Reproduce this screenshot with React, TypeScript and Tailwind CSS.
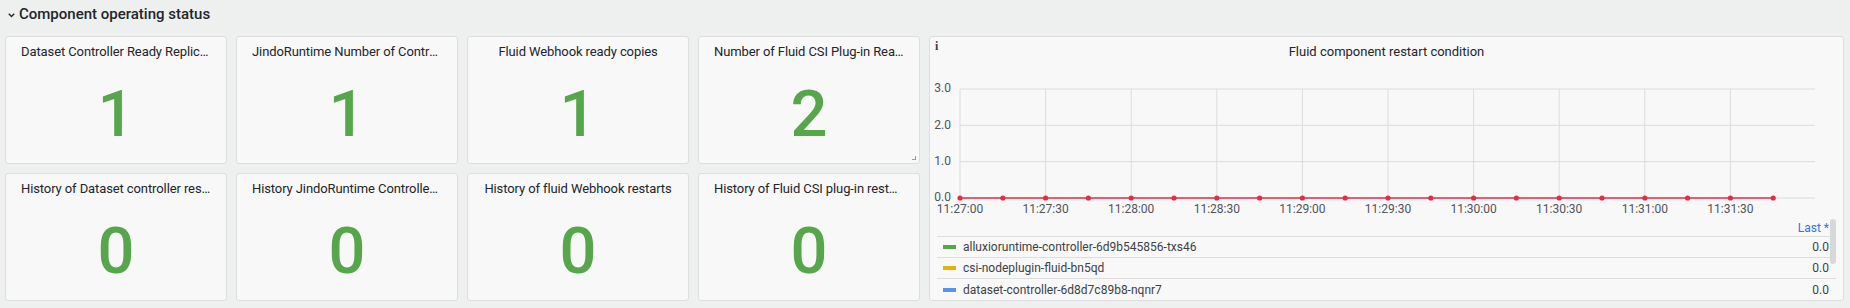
import React from "react";

const font = { fontFamily: "Roboto, 'Liberation Sans', sans-serif" };

type Stat = { title: string; value: string; handle?: boolean };

const row1: Stat[] = [
  { title: "Dataset Controller Ready Replicas", value: "1" },
  { title: "JindoRuntime Number of Controller Ready Replicas", value: "1" },
  { title: "Fluid Webhook ready copies", value: "1" },
  { title: "Number of Fluid CSI Plug-in Ready Replicas", value: "2", handle: true },
];
const row2: Stat[] = [
  { title: "History of Dataset controller restarts", value: "0" },
  { title: "History JindoRuntime Controller restarts", value: "0" },
  { title: "History of fluid Webhook restarts", value: "0" },
  { title: "History of Fluid CSI plug-in restarts", value: "0" },
];

function StatPanel({ s }: { s: Stat }) {
  return (
    <div className="relative flex h-[128px] flex-col rounded-[3px] border border-[#dedede] bg-[#f8f8f8]">
      <div className="flex h-[29px] justify-center px-[15px]">
        <span className="truncate text-[13px] leading-[29px] tracking-[-0.1px] text-[#22252b]">{s.title}</span>
      </div>
      <div className="flex flex-1 items-center justify-center">
        <span className="text-[65px] font-medium leading-none text-[#56a64b]">{s.value}</span>
      </div>
      {s.handle && (
        <div className="absolute bottom-[3px] right-[3px] h-[4px] w-[4px] border-b border-r border-[#999]" />
      )}
    </div>
  );
}

const xLabels = ["11:27:00", "11:27:30", "11:28:00", "11:28:30", "11:29:00", "11:29:30", "11:30:00", "11:30:30", "11:31:00", "11:31:30"];
const yLabels = ["3.0", "2.0", "1.0", "0.0"];

function Chart() {
  const x0 = 30;
  const x1 = 885;
  const ys = [20, 56.33, 92.67, 129];
  const gx = 85.6;
  const px = 42.8;
  return (
    <svg width="913" height="150" className="block">
      {ys.map((y, i) => (
        <g key={i}>
          <line x1={x0} x2={x1} y1={y} y2={y} stroke="#dcdcdc" strokeWidth="1" />
          <text x={21} y={y} textAnchor="end" dominantBaseline="middle" fontSize="12" fill="#52545c" style={font}>
            {yLabels[i]}
          </text>
        </g>
      ))}
      {xLabels.map((l, i) => (
        <g key={l}>
          <line x1={x0 + i * gx} x2={x0 + i * gx} y1={20} y2={129} stroke="#dcdcdc" strokeWidth="1" />
          <text x={x0 + i * gx} y={141} textAnchor="middle" dominantBaseline="middle" fontSize="12" fill="#52545c" style={font}>
            {l}
          </text>
        </g>
      ))}
      <line x1={x0} x2={x0 + 19 * px} y1={129} y2={129} stroke="#e02f44" strokeWidth="1.5" />
      {Array.from({ length: 20 }).map((_, j) => (
        <circle key={j} cx={x0 + j * px} cy={129} r="2.6" fill="#e02f44" />
      ))}
    </svg>
  );
}

const legend = [
  { name: "alluxioruntime-controller-6d9b545856-txs46", color: "#56a64b" },
  { name: "csi-nodeplugin-fluid-bn5qd", color: "#e0b400" },
  { name: "dataset-controller-6d8d7c89b8-nqnr7", color: "#5794f2" },
];

function ChartPanel() {
  return (
    <div className="relative flex h-[265px] w-[915px] flex-col rounded-[3px] border border-[#dedede] bg-[#f8f8f8]">
      <div className="absolute left-[5px] top-[0px] text-[12px] font-bold text-[#3d3f45]" style={{ fontFamily: "'Liberation Serif', serif" }}>
        i
      </div>
      <div className="h-[32px] text-center text-[13px] leading-[29px] text-[#22252b]">
        Fluid component restart condition
      </div>
      <Chart />
      <div className="relative mx-[7px] flex flex-col">
        <div className="flex h-[18px] items-center justify-end border-b border-[#dedede] pr-[7px] text-[12px] text-[#3274d9]">
          Last *
        </div>
        {legend.map((l, i) => (
          <div
            key={l.name}
            className={`flex h-[21px] items-center pr-[7px] text-[12px] text-[#3d3f45] ${i < 2 ? "border-b border-[#dedede]" : ""}`}
          >
            <span className="ml-[6px] mr-[7px] h-[4px] w-[13px]" style={{ backgroundColor: l.color }} />
            <span className="flex-1">{l.name}</span>
            <span>0.0</span>
          </div>
        ))}
        <div className="absolute right-[0px] top-[0px] h-[45px] w-[6px] rounded-[3px] bg-[#d8d8d8]" />
      </div>
    </div>
  );
}

export default function App() {
  return (
    <div className="h-[308px] w-[1850px] bg-[#eeefef]" style={font}>
      <div className="flex h-[28px] items-center pl-[8px] pt-[1px]">
        <svg width="7" height="5" viewBox="0 0 7 5" className="mr-[4px] mt-[2px]">
          <path d="M0.8 0.8 L3.5 3.6 L6.2 0.8" fill="none" stroke="#22252b" strokeWidth="1.4" />
        </svg>
        <span className="text-[15px] font-medium text-[#22252b]">Component operating status</span>
      </div>
      <div className="flex gap-[9px] pl-[5px] pt-[8px]">
        <div className="grid w-[915px] grid-cols-[repeat(4,222px)] grid-rows-[128px_128px] gap-[9px]">
          {row1.map((s) => (
            <StatPanel key={s.title} s={s} />
          ))}
          {row2.map((s) => (
            <StatPanel key={s.title} s={s} />
          ))}
        </div>
        <ChartPanel />
      </div>
    </div>
  );
}
